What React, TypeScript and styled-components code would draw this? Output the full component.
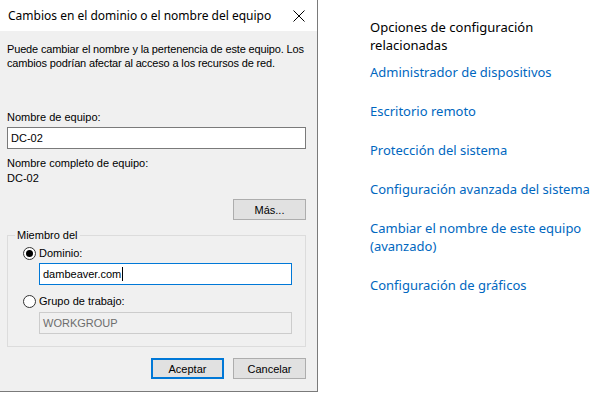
import React from "react";
import styled, { createGlobalStyle } from "styled-components";

const GlobalStyle = createGlobalStyle`
  html, body {
    margin: 0;
    padding: 0;
    background: #ffffff;
  }
  body {
    font-family: "Liberation Sans", Arial, sans-serif;
  }
`;

const Page = styled.div`
  display: flex;
  align-items: flex-start;
  width: 602px;
  height: 395px;
`;

const Dialog = styled.div`
  width: 317px;
  height: 391px;
  border-right: 1px solid #7a7a7a;
  border-bottom: 1px solid #7a7a7a;
  display: flex;
  flex-direction: column;
  background: #f0f0f0;
  color: #000;
  font-family: "Liberation Sans", Arial, sans-serif;
  font-size: 11px;
  line-height: 14px;
`;

const TitleBar = styled.div`
  height: 31px;
  flex-shrink: 0;
  background: #ffffff;
  display: flex;
  align-items: center;
  justify-content: space-between;
  padding: 0 12px 0 8px;
  font-family: "Noto Sans", "Open Sans", sans-serif;
  font-size: 12px;
  color: #000;
`;

const Body = styled.div`
  flex: 1;
  display: flex;
  flex-direction: column;
  padding: 11px 11px 0 7px;
`;

const Text = styled.div<{ $mt?: number }>`
  margin-top: ${(p) => p.$mt ?? 0}px;
`;

const Description = styled.div`
  letter-spacing: -0.15px;
`;

const TextBox = styled.div<{ $focused?: boolean; $disabled?: boolean; $mt?: number }>`
  box-sizing: border-box;
  height: 22px;
  margin-top: ${(p) => p.$mt ?? 0}px;
  display: flex;
  align-items: center;
  padding: 0 3px;
  background: ${(p) => (p.$disabled ? "#f0f0f0" : "#ffffff")};
  border: 1px solid
    ${(p) => (p.$focused ? "#0078d7" : p.$disabled ? "#cccccc" : "#7a7a7a")};
  color: ${(p) => (p.$disabled ? "#6d6d6d" : "#000")};
`;

const Caret = styled.span`
  display: inline-block;
  width: 1px;
  height: 14px;
  background: #000;
  margin-left: 1px;
`;

const ButtonRow = styled.div<{ $mt: number }>`
  display: flex;
  justify-content: flex-end;
  gap: 9px;
  margin-top: ${(p) => p.$mt}px;
`;

const Button = styled.button<{ $default?: boolean }>`
  box-sizing: border-box;
  width: 73px;
  height: 21px;
  padding: 0;
  font-family: "Liberation Sans", Arial, sans-serif;
  font-size: 11px;
  color: #000;
  background: #e1e1e1;
  border: ${(p) => (p.$default ? "2px solid #0078d7" : "1px solid #adadad")};
`;

const GroupBox = styled.fieldset`
  margin: 9px 0 0 0;
  padding: 2px 13px 12px 14px;
  border: 1px solid #dcdcdc;
  min-width: 0;
`;

const Legend = styled.legend`
  padding: 0 2px;
  margin-left: -7px;
  line-height: 13px;
`;

const RadioRow = styled.label<{ $mt?: number }>`
  display: flex;
  align-items: center;
  gap: 3px;
  height: 14px;
  margin-top: ${(p) => p.$mt ?? 0}px;
  margin-left: 1px;
`;

const RadioCircle = styled.span<{ $checked?: boolean }>`
  box-sizing: border-box;
  width: 13px;
  height: 13px;
  border-radius: 50%;
  border: 1px solid #333333;
  background: #ffffff;
  display: flex;
  align-items: center;
  justify-content: center;

  &::after {
    content: "";
    width: 7px;
    height: 7px;
    border-radius: 50%;
    background: ${(p) => (p.$checked ? "#000" : "transparent")};
  }
`;

const Indented = styled.div`
  margin-left: 17px;
`;

const Side = styled.div`
  display: flex;
  flex-direction: column;
  gap: 21px;
  padding: 18px 0 0 52px;
  font-family: "Noto Sans", "Open Sans", sans-serif;
  font-size: 13px;
  line-height: 18px;
`;

const Heading = styled.div`
  color: #000;
  width: 180px;
  margin-bottom: -12px;
`;

const Link = styled.a`
  color: #0067c0;
  text-decoration: none;
  width: 226px;
`;

const links = [
  "Administrador de dispositivos",
  "Escritorio remoto",
  "Protección del sistema",
  "Configuración avanzada del sistema",
  "Cambiar el nombre de este equipo (avanzado)",
  "Configuración de gráficos",
];

export default function App() {
  return (
    <Page>
      <GlobalStyle />
      <Dialog>
        <TitleBar>
          <span>Cambios en el dominio o el nombre del equipo</span>
          <svg width="12" height="12" viewBox="0 0 12 12">
            <path d="M0.5 0.5 L11.5 11.5 M11.5 0.5 L0.5 11.5" stroke="#000" strokeWidth="1" />
          </svg>
        </TitleBar>
        <Body>
          <Description>
            Puede cambiar el nombre y la pertenencia de este equipo. Los cambios podrían afectar al
            acceso a los recursos de red.
          </Description>
          <Text $mt={40}>Nombre de equipo:</Text>
          <TextBox $mt={3}>DC-02</TextBox>
          <Text $mt={7}>Nombre completo de equipo:</Text>
          <Text $mt={1}>DC-02</Text>
          <ButtonRow $mt={14}>
            <Button>Más...</Button>
          </ButtonRow>
          <GroupBox>
            <Legend>Miembro del</Legend>
            <RadioRow $mt={2}>
              <RadioCircle $checked />
              Dominio:
            </RadioRow>
            <Indented>
              <TextBox $focused $mt={3}>
                dambeaver.com
                <Caret />
              </TextBox>
            </Indented>
            <RadioRow $mt={9}>
              <RadioCircle />
              Grupo de trabajo:
            </RadioRow>
            <Indented>
              <TextBox $disabled $mt={4}>
                WORKGROUP
              </TextBox>
            </Indented>
          </GroupBox>
          <ButtonRow $mt={11}>
            <Button $default>Aceptar</Button>
            <Button>Cancelar</Button>
          </ButtonRow>
        </Body>
      </Dialog>
      <Side>
        <Heading>Opciones de configuración relacionadas</Heading>
        {links.map((l) => (
          <Link key={l} href="#">
            {l}
          </Link>
        ))}
      </Side>
    </Page>
  );
}
